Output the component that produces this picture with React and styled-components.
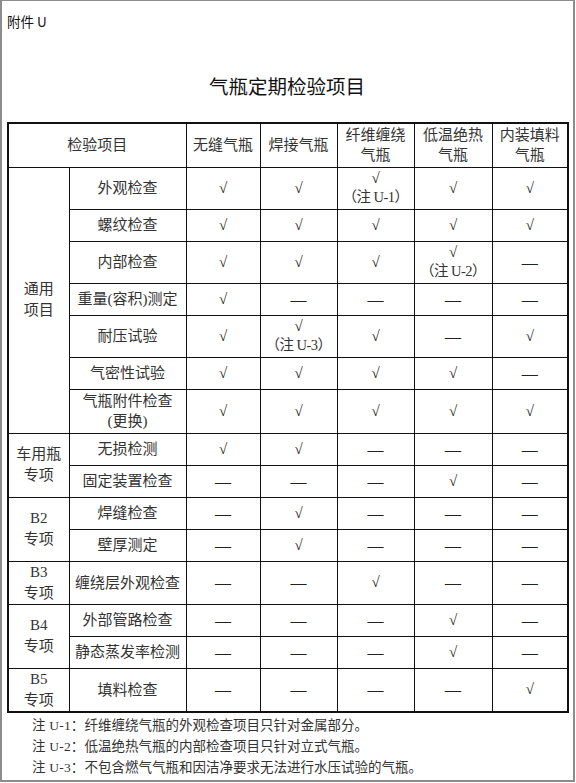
import styled, { createGlobalStyle } from 'styled-components'

const GlobalStyle = createGlobalStyle`
  html, body {
    margin: 0;
    padding: 0;
    background: #ffffff;
  }
  * {
    box-sizing: border-box;
  }
`;

const Y = '√';
const N = '—';

// 表格数据：每组一个分类，行内 cells 对应五种气瓶
const groups = [
  {
    name: ['通用', '项目'],
    rows: [
      { item: ['外观检查'], h: 42, cells: [Y, Y, [Y, '（注 U-1）'], Y, Y] },
      { item: ['螺纹检查'], h: 32, cells: [Y, Y, Y, Y, Y] },
      { item: ['内部检查'], h: 42, cells: [Y, Y, Y, [Y, '（注 U-2）'], N] },
      { item: ['重量(容积)测定'], h: 32, cells: [Y, N, N, N, N] },
      { item: ['耐压试验'], h: 42, cells: [Y, [Y, '（注 U-3）'], Y, N, Y] },
      { item: ['气密性试验'], h: 32, cells: [Y, Y, Y, Y, N] },
      { item: ['气瓶附件检查', '(更换)'], h: 44, cells: [Y, Y, Y, Y, Y] },
    ],
  },
  {
    name: ['车用瓶', '专项'],
    rows: [
      { item: ['无损检测'], h: 32, cells: [Y, Y, N, N, N] },
      { item: ['固定装置检查'], h: 32, cells: [N, N, N, Y, N] },
    ],
  },
  {
    name: ['B2', '专项'],
    rows: [
      { item: ['焊缝检查'], h: 32, cells: [N, Y, N, N, N] },
      { item: ['壁厚测定'], h: 32, cells: [N, Y, N, N, N] },
    ],
  },
  {
    name: ['B3', '专项'],
    rows: [{ item: ['缠绕层外观检查'], h: 42, cells: [N, N, Y, N, N] }],
  },
  {
    name: ['B4', '专项'],
    rows: [
      { item: ['外部管路检查'], h: 32, cells: [N, N, N, Y, N] },
      { item: ['静态蒸发率检测'], h: 32, cells: [N, N, N, Y, N] },
    ],
  },
  {
    name: ['B5', '专项'],
    rows: [{ item: ['填料检查'], h: 42, cells: [N, N, N, N, Y] }],
  },
];

const headers = [['无缝气瓶'], ['焊接气瓶'], ['纤维缠绕', '气瓶'], ['低温绝热', '气瓶'], ['内装填料', '气瓶']];
const colWidths = [61, 117, 74, 77, 77, 78, 76];

const notes = [
  ['注 U-1：', '纤维缠绕气瓶的外观检查项目只针对金属部分。'],
  ['注 U-2：', '低温绝热气瓶的内部检查项目只针对立式气瓶。'],
  ['注 U-3：', '不包含燃气气瓶和因洁净要求无法进行水压试验的气瓶。'],
];

function Lines({ lines }) {
  return lines.map((line, i) => <Line key={i}>{line}</Line>);
}

export default function App() {
  return (
    <>
      <GlobalStyle />
      <Page>
        <Attachment>附件 U</Attachment>
        <Title>气瓶定期检验项目</Title>

        <Table>
          <colgroup>
            {colWidths.map((w, i) => (
              <col key={i} style={{ width: w }} />
            ))}
          </colgroup>
          <tbody>
            <tr style={{ height: 44 }}>
              <Cell colSpan={2}>检验项目</Cell>
              {headers.map((h, i) => (
                <Cell key={i}>
                  <Lines lines={h} />
                </Cell>
              ))}
            </tr>
            {groups.map((g) =>
              g.rows.map((row, ri) => (
                <tr key={g.name.join() + ri} style={{ height: row.h }}>
                  {ri === 0 && (
                    <Cell rowSpan={g.rows.length} $group>
                      <Lines lines={g.name} />
                    </Cell>
                  )}
                  <Cell>
                    <Lines lines={row.item} />
                  </Cell>
                  {row.cells.map((c, ci) => (
                    <Cell key={ci}>
                      {Array.isArray(c) ? (
                        <>
                          <Mark>{c[0]}</Mark>
                          <NoteRef>{c[1]}</NoteRef>
                        </>
                      ) : (
                        <Mark $dash={c === N}>{c}</Mark>
                      )}
                    </Cell>
                  ))}
                </tr>
              ))
            )}
          </tbody>
        </Table>

        <Notes>
          {notes.map((n, i) => (
            <Note key={i}>
              <NoteLabel>{n[0]}</NoteLabel>
              {n[1]}
            </Note>
          ))}
        </Notes>
      </Page>
    </>
  );
}

const Page = styled.div`
  width: 575px;
  height: 782px;
  border-style: solid;
  border-color: #8c8c8c;
  border-width: 1px 2px 2px 2px;
  padding: 0 0 0 5px;
  background: #ffffff;
  color: #2a2a2a;
  overflow: hidden;
`;

const Attachment = styled.div`
  padding-top: 10px;
  line-height: 20px;
  font-size: 13.5px;
  font-family: "Noto Sans CJK SC", "Liberation Sans", sans-serif;
  color: #111111;
`;

const Title = styled.h1`
  margin: 41px 0 0;
  width: 560px;
  text-align: center;
  line-height: 28px;
  font-size: 19.5px;
  font-weight: 400;
  font-family: "Noto Sans CJK SC", "Liberation Sans", sans-serif;
  color: #111111;
`;

const Table = styled.table`
  margin-top: 22px;
  width: 560px;
  table-layout: fixed;
  border-collapse: collapse;
  border: 2px solid #111111;
`;

const Cell = styled.td`
  border: 1px solid #111111;
  padding: 0;
  text-align: center;
  vertical-align: middle;
  font-family: "Liberation Serif", "Noto Sans CJK SC", serif;
  font-size: 15px;
  line-height: ${(p) => (p.$group ? '21px' : '20px')};
  color: #333333;
`;

const Line = styled.div`
  white-space: nowrap;
`;

const Mark = styled.div`
  font-family: "Liberation Serif", "DejaVu Serif", serif;
  font-size: ${(p) => (p.$dash ? '16px' : '15px')};
  line-height: 19px;
  color: #222222;
`;

const NoteRef = styled.div`
  font-family: "Liberation Serif", "Noto Sans CJK SC", serif;
  font-size: 14.5px;
  line-height: 19px;
  letter-spacing: -0.5px;
  white-space: nowrap;
`;

const Notes = styled.div`
  margin-top: 2px;
  padding-left: 25px;
`;

const Note = styled.div`
  font-family: "Liberation Serif", "Noto Sans CJK SC", serif;
  font-size: 13.5px;
  line-height: 21px;
  color: #333333;
  white-space: nowrap;
`;

const NoteLabel = styled.span`
  letter-spacing: 0.2px;
`;
